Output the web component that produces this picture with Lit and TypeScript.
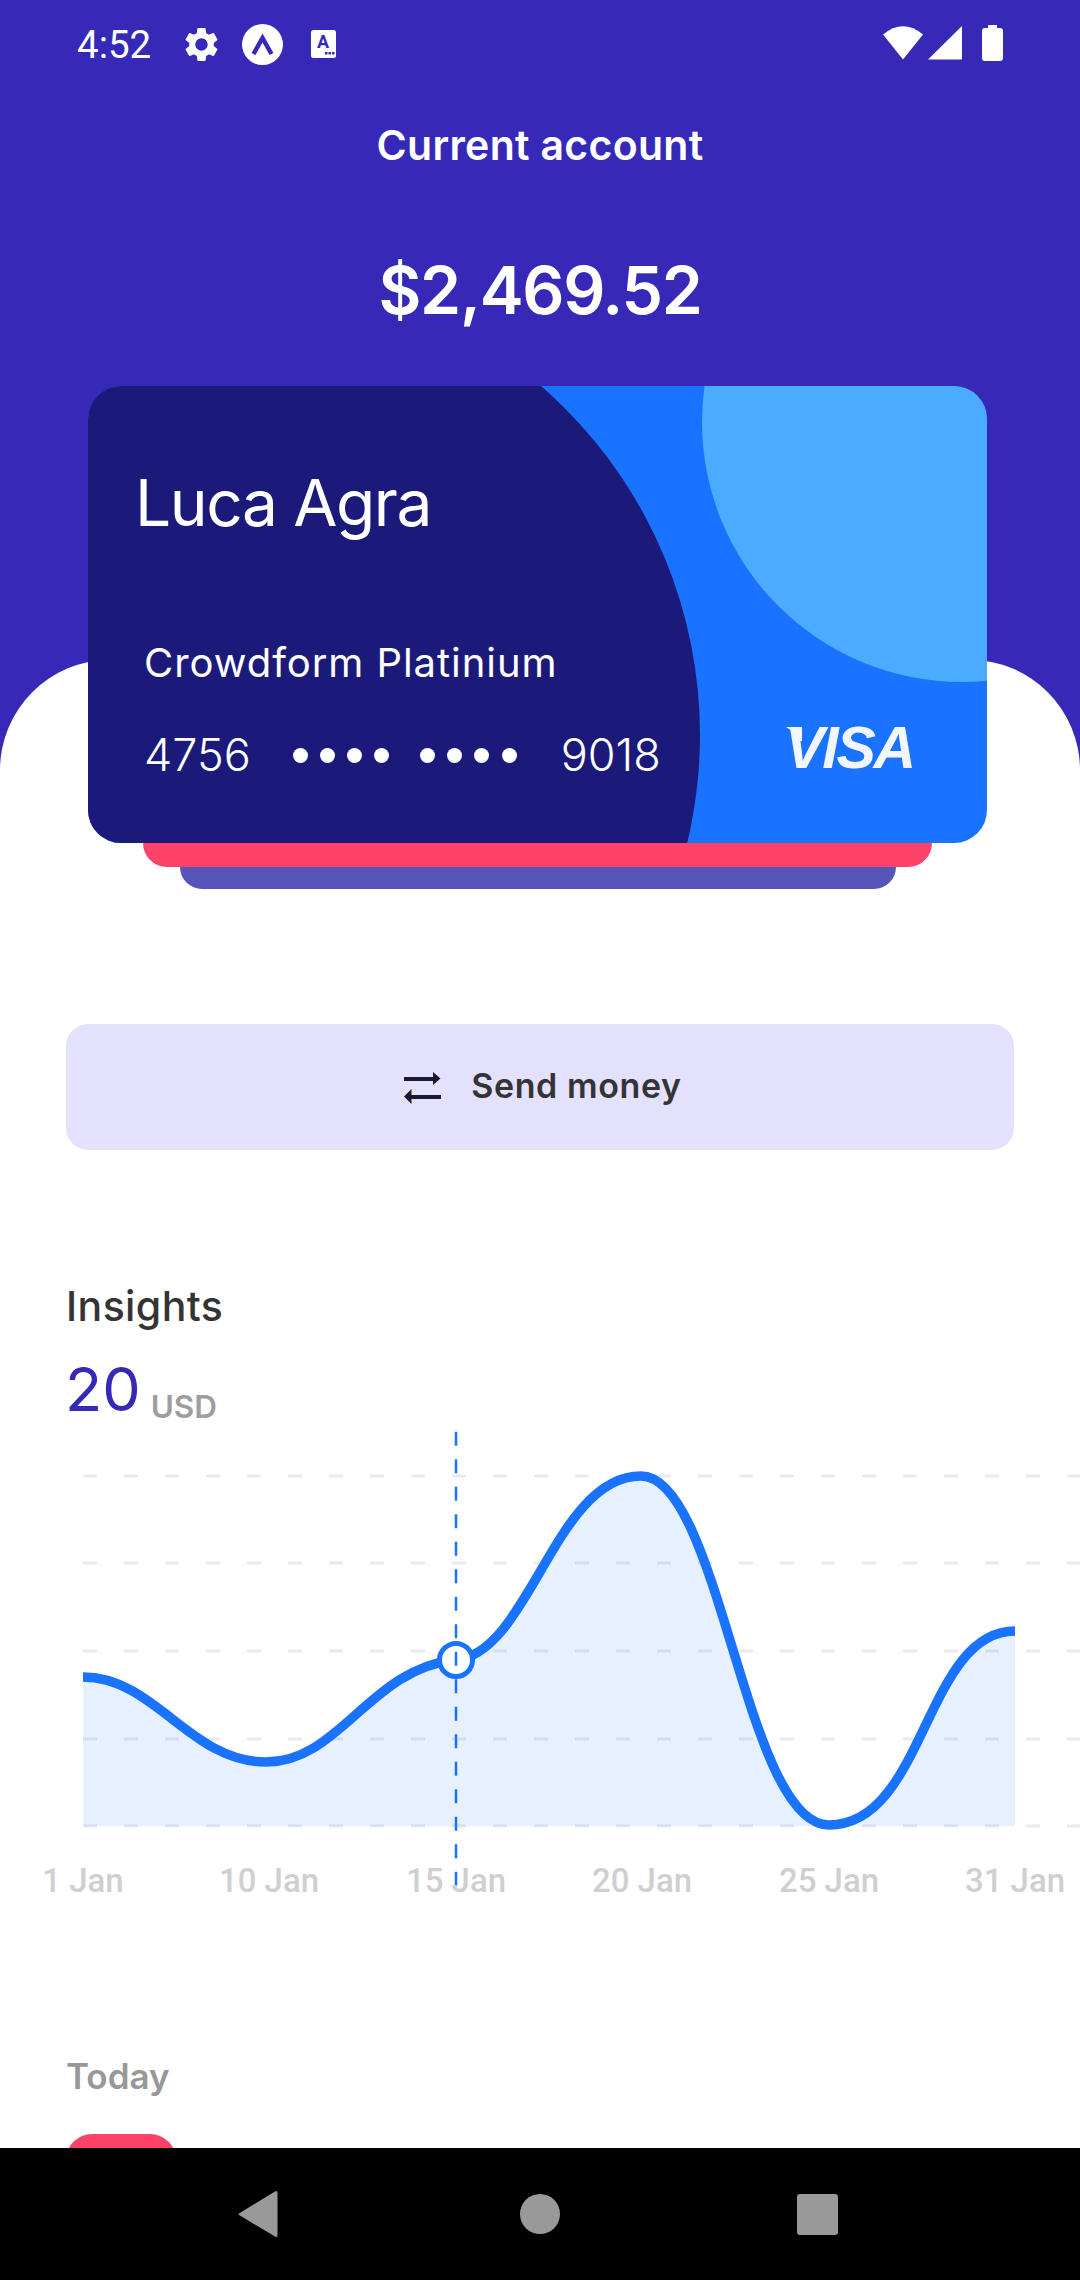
import {LitElement, html, css, svg} from 'lit';
import {customElement} from 'lit/decorators.js';

const GEAR =
  'M19.14 12.94c.04-.3.06-.61.06-.94 0-.32-.02-.64-.07-.94l2.03-1.58c.18-.14.23-.41.12-.61l-1.92-3.32c-.12-.22-.37-.29-.59-.22l-2.39.96c-.5-.38-1.03-.7-1.62-.94l-.36-2.54c-.04-.24-.24-.41-.48-.41h-3.84c-.24 0-.43.17-.47.41l-.36 2.54c-.59.24-1.13.57-1.62.94l-2.39-.96c-.22-.08-.47 0-.59.22L2.74 8.87c-.12.21-.08.47.12.61l2.03 1.58c-.05.3-.09.63-.09.94s.02.64.07.94l-2.03 1.58c-.18.14-.23.41-.12.61l1.92 3.32c.12.22.37.29.59.22l2.39-.96c.5.38 1.03.7 1.62.94l.36 2.54c.05.24.24.41.48.41h3.84c.24 0 .44-.17.47-.41l.36-2.54c.59-.24 1.13-.56 1.62-.94l2.39.96c.22.08.47 0 .59-.22l1.92-3.32c.12-.22.07-.47-.12-.61l-2.01-1.58zM12 15.6c-1.98 0-3.6-1.62-3.6-3.6s1.62-3.6 3.6-3.6 3.6 1.62 3.6 3.6-1.62 3.6-3.6 3.6z';

// chart geometry, in page pixels of the 1080 wide svg
const CURVE =
  'M83 1677C155 1677 190 1762 266 1762C340 1762 370 1668 456 1660C530 1652 555 1476 641 1476C720 1476 745 1825 829 1825C925 1825 925 1631 1015 1631';
const GRID_YS = [1476, 1563, 1651, 1739, 1826];
const LABELS: [number, string][] = [
  [83, '1 Jan'],
  [269, '10 Jan'],
  [456, '15 Jan'],
  [642, '20 Jan'],
  [829, '25 Jan'],
  [1015, '31 Jan'],
];
const CHART_TOP = 1420;

@customElement('app-root')
export class AppRoot extends LitElement {
  static styles = css`
    :host {
      display: flex;
      flex-direction: column;
      width: 1080px;
      height: 2280px;
      overflow: hidden;
      background: #fff;
      font-family: Inter, 'Noto Sans', sans-serif;
    }

    .main {
      flex: 1;
      min-height: 0;
      overflow: hidden;
    }

    .hero {
      position: relative;
      z-index: 1;
      height: 660px;
      background: #3629b7;
      color: #fff;
      text-align: center;
    }

    .status {
      display: flex;
      align-items: center;
      height: 88px;
      padding: 0 77px;
      font-family: Roboto, sans-serif;
      font-size: 38.5px;
    }

    .status svg {
      display: block;
      flex: none;
    }

    .time {
      width: 74px;
      margin-right: 30px;
      text-align: left;
    }

    .gear {
      margin-right: 20px;
    }

    .badge {
      margin-right: 28px;
    }

    .status-right {
      display: flex;
      margin: -2px 0 0 auto;
    }

    .title {
      margin-top: 32px;
      font-size: 41px;
      line-height: 50px;
      font-weight: 600;
      letter-spacing: 0.3px;
    }

    .balance {
      margin-top: 80px;
      font-size: 66px;
      line-height: 80px;
      font-weight: 600;
      letter-spacing: -1.3px;
    }

    .stack {
      width: 899px;
      margin: 56px 0 0 88px;
    }

    .card {
      position: relative;
      height: 457px;
      overflow: hidden;
      border-radius: 33px;
      background: #1973ff;
      text-align: left;
    }

    .card-art {
      position: absolute;
      inset: 0;
    }

    .card-body {
      position: relative;
      display: flex;
      flex-direction: column;
      height: 100%;
      box-sizing: border-box;
      padding: 77px 73px 0 47px;
    }

    .holder {
      font-size: 64px;
      line-height: 80px;
      font-weight: 400;
      letter-spacing: -1.4px;
    }

    .product {
      margin: 95px 0 0 9px;
      font-size: 40px;
      line-height: 50px;
      font-weight: 400;
      letter-spacing: 0.95px;
    }

    .bottom {
      display: flex;
      align-items: center;
      margin: 42px 0 0 9px;
      font-size: 45px;
      line-height: 50px;
      font-weight: 300;
    }

    .dots {
      display: flex;
      gap: 12.2px;
      margin: 0 44px 0 42px;
    }

    .dots i {
      width: 15px;
      height: 15px;
      border-radius: 50%;
      background: #fff;
    }

    .dots i:nth-child(4) {
      margin-right: 18.5px;
    }

    .visa {
      position: relative;
      margin: -14px 0 0 auto;
      font-family: 'Liberation Sans', sans-serif;
      font-size: 59px;
      line-height: 50px;
      font-weight: 700;
      font-style: italic;
      letter-spacing: -2.2px;
      color: #f2f7ff;
    }

    /* the small flick on the V of the logo */
    .visa::before {
      content: '';
      position: absolute;
      left: 1px;
      top: 4px;
      width: 16px;
      height: 14px;
      background: #f2f7ff;
      clip-path: polygon(0 0, 100% 0, 100% 100%, 70% 100%, 50% 40%);
    }

    .layer {
      margin-left: auto;
      margin-right: auto;
    }

    .layer-red {
      width: 789px;
      height: 24px;
      border-radius: 0 0 24px 24px;
      background: #ff4267;
    }

    .layer-violet {
      width: 716px;
      height: 22px;
      border-radius: 0 0 24px 24px;
      background: #5655b9;
    }

    .sheet-wrap {
      background: linear-gradient(#3629b7 0 110px, #fff 110px);
    }

    .sheet {
      height: 1488px;
      box-sizing: border-box;
      padding-top: 364px;
      border-radius: 110px 110px 0 0;
      background: #fff;
    }

    .send {
      display: flex;
      align-items: center;
      justify-content: center;
      gap: 30px;
      width: 948px;
      height: 126px;
      margin-left: 66px;
      padding-left: 6px;
      box-sizing: border-box;
      border-radius: 22px;
      background: #e4e1ff;
      font-size: 34px;
      font-weight: 600;
      letter-spacing: 0.6px;
      color: #343434;
    }

    .send svg {
      display: block;
      margin-top: 2px;
    }

    .send span {
      margin-top: -4px;
    }

    .insights {
      margin: 131px 0 0 66px;
      font-size: 41px;
      line-height: 50px;
      font-weight: 500;
      letter-spacing: 0.4px;
      color: #343434;
    }

    .figure {
      display: flex;
      align-items: baseline;
      gap: 10px;
      height: 66px;
      margin: 23px 0 0 65px;
      line-height: 70px;
    }

    .figure b {
      font-size: 61px;
      font-weight: 400;
      color: #3629b7;
    }

    .figure span {
      position: relative;
      top: 7px;
      font-size: 31.5px;
      font-weight: 600;
      color: #9e9e9e;
    }

    .chart {
      display: block;
    }

    .chart text {
      font-family: Roboto, sans-serif;
      font-size: 33px;
      font-weight: 500;
      fill: #cfcfcf;
      text-anchor: middle;
    }

    .today {
      margin: 156px 0 0 66px;
      font-size: 35px;
      line-height: 40px;
      font-weight: 600;
      color: #989898;
    }

    .pill {
      width: 110px;
      height: 80px;
      margin: 38px 0 0 66px;
      border-radius: 26px;
      background: #ff4267;
    }

    .nav {
      display: flex;
      align-items: center;
      flex: none;
      height: 132px;
      background: #000;
    }

    .nav svg {
      display: block;
    }
  `;

  private renderStatus() {
    return html`
      <div class="status">
        <span class="time">4:52</span>
        <svg class="gear" width="41" height="41" viewBox="0 0 24 24" fill="#fff"><path d=${GEAR}></path></svg>
        <svg class="badge" width="41" height="41" viewBox="0 0 41 41">
          <circle cx="20.5" cy="20.5" r="20.5" fill="#fff"></circle>
          <path d="M11.5 30L20.5 14L29.5 30" fill="none" stroke="#3629b7" stroke-width="4.5"></path>
        </svg>
        <svg width="25" height="28" viewBox="0 0 25 28">
          <rect width="25" height="28" rx="2.5" fill="#fff"></rect>
          <text x="12" y="18" text-anchor="middle" font-family="Roboto" font-size="18" font-weight="700" fill="#3629b7">A</text>
          <rect x="14" y="22" width="2.5" height="2.5" fill="#3629b7"></rect>
          <rect x="17.5" y="22" width="2.5" height="2.5" fill="#3629b7"></rect>
          <rect x="21" y="22" width="2.5" height="2.5" fill="#3629b7"></rect>
        </svg>
        <div class="status-right">
          <svg width="120" height="36" viewBox="0 0 120 36" fill="#fff">
            <path d="M0 9.5Q20 -7 40 9.5L20 34.5Z"></path>
            <path d="M45 34.5L79 34.5L79 1Z"></path>
            <rect x="105" y="0" width="9" height="4"></rect>
            <rect x="99" y="3" width="21" height="33" rx="3"></rect>
          </svg>
        </div>
      </div>
    `;
  }

  private renderCard() {
    const dots = Array.from({length: 8}, () => html`<i></i>`);
    return html`
      <div class="card">
        <svg class="card-art" width="899" height="457" viewBox="0 0 899 457">
          <circle cx="874" cy="36" r="260" fill="#4bacff"></circle>
          <circle cx="149.5" cy="349" r="462.5" fill="#1b1a7a"></circle>
        </svg>
        <div class="card-body">
          <div class="holder">Luca Agra</div>
          <div class="product">Crowdform Platinium</div>
          <div class="bottom">
            <span>4756</span>
            <div class="dots">${dots}</div>
            <span>9018</span>
            <span class="visa">VISA</span>
          </div>
        </div>
      </div>
      <div class="layer layer-red"></div>
      <div class="layer layer-violet"></div>
    `;
  }

  private renderChart() {
    const fill = `${CURVE}L1015 1826L83 1826Z`;
    return html`
      <svg class="chart" width="1080" height="480" viewBox="0 ${CHART_TOP} 1080 480">
        ${GRID_YS.map(
          (y) => svg`<line x1="83" x2="1080" y1=${y} y2=${y} stroke="#e9e9f1" stroke-width="3" stroke-dasharray="14 27"></line>`
        )}
        <path d=${fill} fill="#1973ff" fill-opacity="0.11"></path>
        <path d=${CURVE} fill="none" stroke="#1973ff" stroke-width="9.5"></path>
        <circle cx="456" cy="1660" r="16.5" fill="#fff" stroke="#1973ff" stroke-width="5"></circle>
        <line x1="456" x2="456" y1="1431.7" y2="1888" stroke="#1973ff" stroke-width="2.5" stroke-dasharray="14 13.5"></line>
        ${LABELS.map(([x, label]) => svg`<text x=${x} y="1892">${label}</text>`)}
      </svg>
    `;
  }

  render() {
    return html`
      <div class="main">
        <section class="hero">
          ${this.renderStatus()}
          <div class="title">Current account</div>
          <div class="balance">$2,469.52</div>
          <div class="stack">${this.renderCard()}</div>
        </section>
        <div class="sheet-wrap">
          <section class="sheet">
            <div class="send">
              <svg width="37" height="33" viewBox="0 0 37 33" fill="#1c1a2e">
                <path d="M0 5H29V0L36.5 6.5L29 13V9H0Z"></path>
                <path d="M37 23H7.5V17L0 24.5L7.5 32V27H37Z"></path>
              </svg>
              <span>Send money</span>
            </div>
            <div class="insights">Insights</div>
            <div class="figure"><b>20</b><span>USD</span></div>
            ${this.renderChart()}
            <div class="today">Today</div>
            <div class="pill"></div>
          </section>
        </div>
      </div>
      <nav class="nav">
        <svg width="1080" height="132" viewBox="0 0 1080 132" fill="#999">
          <path d="M239 65.5Q238 66 239 67L275 88.5Q277.5 90 277.5 87V45Q277.5 42 275 43.5Z"></path>
          <circle cx="540" cy="66" r="20"></circle>
          <rect x="797" y="46" width="41" height="41" rx="3"></rect>
        </svg>
      </nav>
    `;
  }
}
